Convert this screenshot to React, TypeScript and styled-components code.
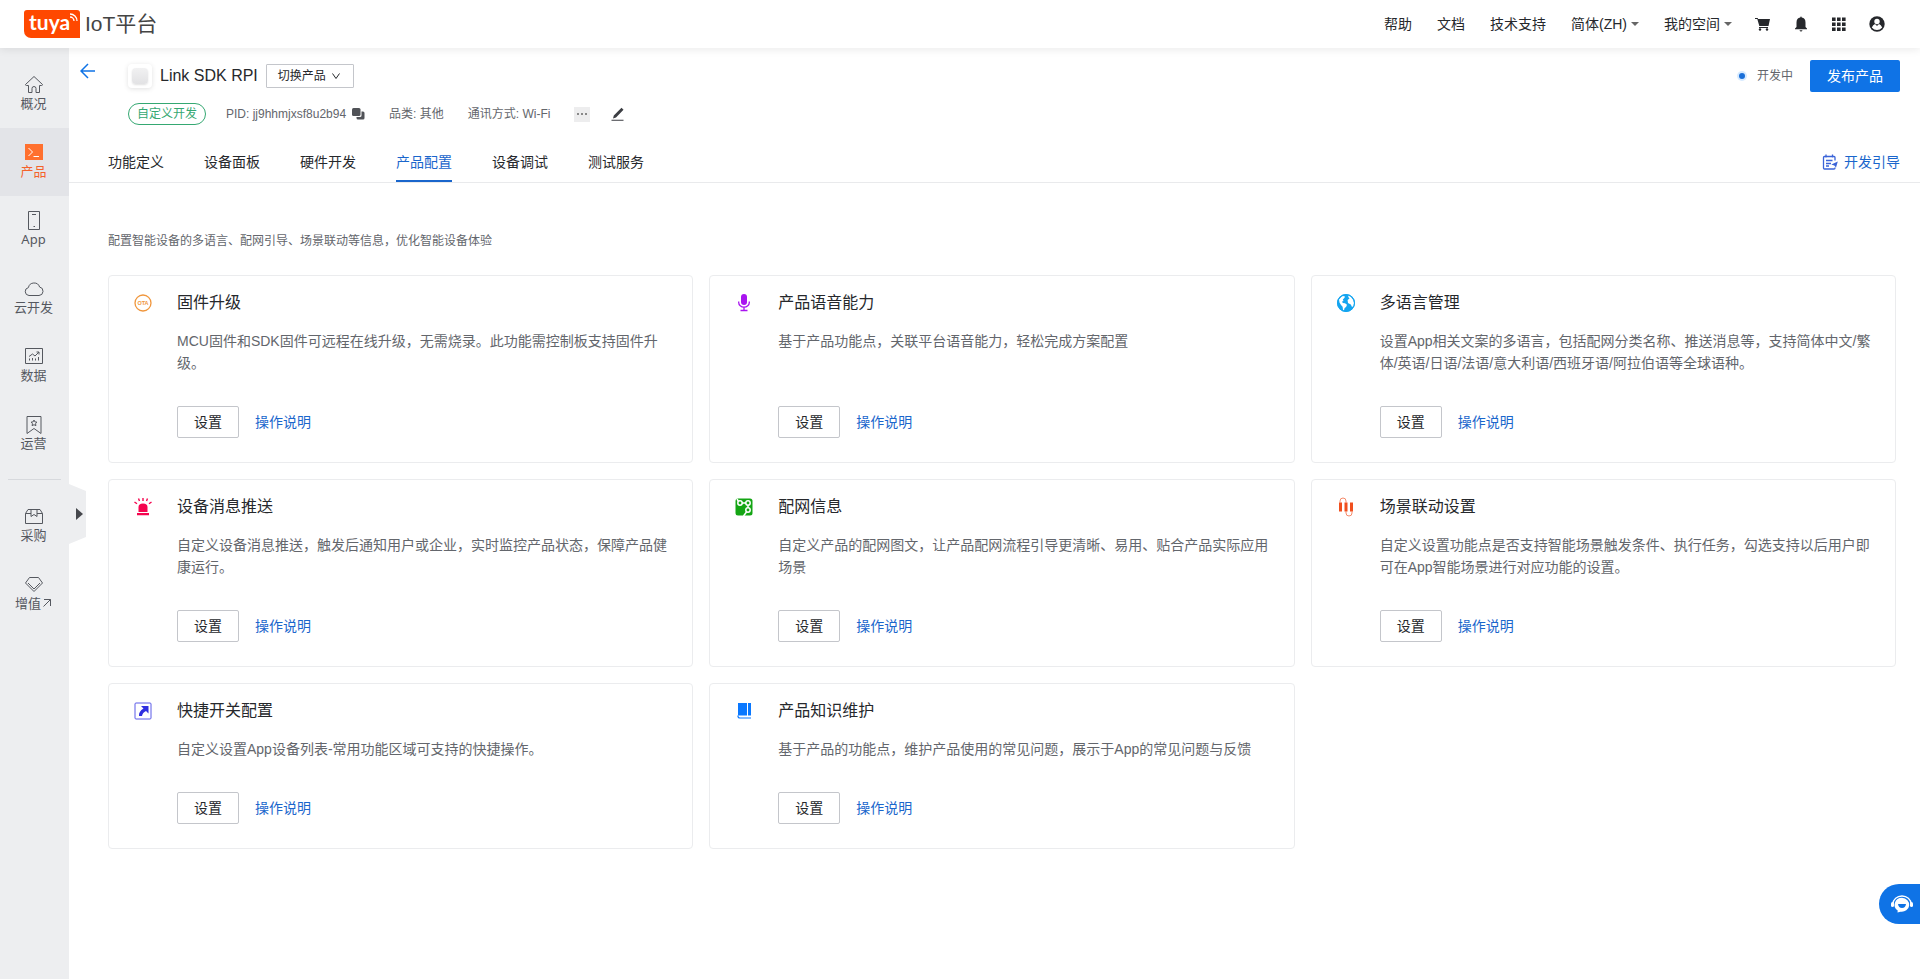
import React from 'react';
import styled, { createGlobalStyle, css } from 'styled-components';

const BLUE = '#0f73e6';
const LINK = '#1a66cc';
const INK = '#26282c';
const GREY = '#63666c';

const GlobalStyle = createGlobalStyle`
  *, *::before, *::after { box-sizing: border-box; }
  body {
    margin: 0;
    background: #fff;
    color: ${INK};
    font-family: 'Liberation Sans', 'Noto Sans CJK SC', sans-serif;
    font-size: 14px;
    line-height: 22px;
  }
  h1, h2, p, ul { margin: 0; padding: 0; font-weight: inherit; }
  ul { list-style: none; }
  a { color: inherit; text-decoration: none; }
  button { font: inherit; color: inherit; border: 0; background: none; padding: 0; cursor: pointer; }
  svg { display: block; flex: none; }
`;

/* ---------- top bar ---------- */

const TopBar = styled.header`
  position: relative;
  z-index: 2;
  display: flex;
  align-items: center;
  justify-content: space-between;
  height: 48px;
  padding: 0 35px 0 24px;
  background: #fff;
  box-shadow: 0 2px 8px rgba(0, 0, 0, 0.08);
`;

const Brand = styled.a`
  display: flex;
  align-items: center;
  gap: 5px;
  color: #444;
  font-size: 21px;
  line-height: 28px;
`;

const BrandMark = styled.span`
  position: relative;
  width: 56px;
  height: 28px;
  padding-left: 5px;
  border-radius: 3px 3px 0 7px;
  background: #ff4800;
  color: #fff;
  font: 700 21px/24px Lato, sans-serif;

  svg {
    position: absolute;
    top: 3px;
    right: 2px;
  }
`;

const TopNav = styled.nav`
  display: flex;
  align-items: center;
  gap: 25px;
`;

const TopItem = styled.button`
  display: flex;
  align-items: center;
  gap: 4px;
`;

const TopIcons = styled.div`
  display: flex;
  align-items: center;
  gap: 22px;
  margin-left: -3px;
`;

const Caret = styled.span`
  border: 4px solid transparent;
  border-top: 4px solid #666;
  border-bottom: 0;
`;

/* ---------- side bar ---------- */

const Body = styled.div`
  display: flex;
  min-height: calc(100vh - 48px);
`;

const Side = styled.aside`
  position: relative;
  flex: none;
  width: 69px;
  padding-top: 12px;
  background: #edeef0;
`;

const SideItem = styled.a<{ $active?: boolean }>`
  display: flex;
  flex-direction: column;
  align-items: center;
  height: 68px;
  padding: 13px 2px 0 0;
  color: #55585f;
  font: 13px/16px 'Noto Sans', 'Noto Sans CJK SC', sans-serif;
  ${p => p.$active && css`
    background: #e3e4e8;
    color: #f4622a;
  `}
`;

const SideLabel = styled.span`
  display: flex;
  align-items: center;
  gap: 1px;
`;

const SideRule = styled.hr`
  height: 1px;
  margin: 11px 8px 12px;
  border: 0;
  background: #d7d9dd;
`;

const Handle = styled.button`
  position: absolute;
  top: 436px;
  left: 69px;
  width: 17px;
  height: 60px;
`;

/* ---------- product head ---------- */

const Main = styled.main`
  flex: 1;
  min-width: 0;
`;

const Head = styled.div`
  display: flex;
  align-items: flex-start;
  padding: 12px 20px 16px 11px;
`;

const Back = styled.button`
  margin: 3px 32px 0 0;
  line-height: 0;
`;

const Info = styled.div`
  display: flex;
  flex-direction: column;
  flex: 1;
  gap: 15px;
  padding-top: 4px;
`;

const TitleRow = styled.div`
  display: flex;
  align-items: center;
  height: 24px;

  h1 {
    margin: 0 8px;
    font-size: 16px;
    line-height: 24px;
  }
`;

const Thumb = styled.span`
  display: grid;
  place-items: center;
  width: 24px;
  height: 24px;
  border-radius: 4px;
  background: #fff;
  box-shadow: 0 1px 5px rgba(0, 0, 0, 0.12);

  &::after {
    content: '';
    width: 16px;
    height: 16px;
    border-radius: 4px;
    background: linear-gradient(#f1f1f2, #e2e2e4);
    box-shadow: 0 1px 2px rgba(0, 0, 0, 0.12);
  }
`;

const SwitchButton = styled.button`
  display: flex;
  align-items: center;
  gap: 6px;
  height: 24px;
  padding: 0 13px 0 11px;
  border: 1px solid #c4c6cb;
  border-radius: 1px;
  font-size: 12px;
`;

const MetaRow = styled.div`
  display: flex;
  align-items: center;
  height: 22px;
  color: ${GREY};
  font-size: 12px;
`;

const Tag = styled.span`
  margin-right: 20px;
  padding: 0 8px;
  border: 1px solid #35a872;
  border-radius: 11px;
  color: #35a872;
  line-height: 20px;
`;

const Meta = styled.span`
  display: flex;
  align-items: center;
  gap: 6px;
  margin-right: 24px;
`;

const More = styled.button`
  display: flex;
  align-items: center;
  justify-content: center;
  gap: 2px;
  width: 16px;
  height: 15px;
  margin-right: 21px;
  background: #ededee;

  i {
    width: 2px;
    height: 2px;
    background: #888;
  }
`;

const Actions = styled.div`
  display: flex;
  align-items: center;
  gap: 17px;
`;

const Status = styled.span`
  display: flex;
  align-items: center;
  gap: 12px;
  color: ${GREY};
  font-size: 12px;

  &::before {
    content: '';
    width: 6px;
    height: 6px;
    border-radius: 50%;
    background: #1a6fd8;
    box-shadow: 0 0 0 2px #d6eaff;
  }
`;

const Publish = styled.button`
  height: 32px;
  padding: 0 17px;
  border-radius: 2px;
  background: ${BLUE};
  color: #fff;
`;

/* ---------- tabs ---------- */

const TabBar = styled.div`
  display: flex;
  justify-content: space-between;
  height: 42px;
  padding: 0 20px 0 39px;
  border-bottom: 1px solid #e9eaec;
`;

const Tabs = styled.nav`
  display: flex;
  gap: 40px;
`;

const Tab = styled.a<{ $active?: boolean }>`
  border-bottom: 2px solid ${p => (p.$active ? LINK : 'transparent')};
  color: ${p => (p.$active ? LINK : INK)};
  line-height: 42px;
`;

const Guide = styled.a`
  display: flex;
  align-items: center;
  gap: 6px;
  color: ${LINK};
`;

/* ---------- cards ---------- */

const Content = styled.section`
  padding: 48px 24px 24px 39px;
`;

const Intro = styled.p`
  margin-bottom: 24px;
  color: ${GREY};
  font-size: 12px;
  line-height: 20px;
`;

const Cards = styled.ul`
  display: grid;
  grid-template-columns: repeat(3, minmax(0, 1fr));
  gap: 16px;
`;

const Card = styled.li`
  display: flex;
  gap: 24px;
  padding: 16px 24px 24px;
  border: 1px solid #ebecee;
  border-radius: 4px;
`;

const CardIcon = styled.span`
  width: 20px;
  padding-top: 1px;
`;

const CardBody = styled.div`
  display: flex;
  flex: 1;
  flex-direction: column;
  min-width: 0;

  h2 {
    font-size: 16px;
  }

  p {
    margin: 16px 0 32px;
    color: ${GREY};
  }
`;

const CardActions = styled.div`
  display: flex;
  align-items: center;
  gap: 16px;
  margin-top: auto;

  a {
    color: ${LINK};
  }
`;

const SetButton = styled.button`
  width: 62px;
  height: 32px;
  border: 1px solid #c4c6cb;
  border-radius: 2px;
`;

const Chat = styled.button`
  position: fixed;
  right: 0;
  bottom: 55px;
  display: flex;
  align-items: center;
  width: 41px;
  height: 40px;
  padding-left: 12px;
  border-radius: 20px 0 0 20px;
  background: ${BLUE};
`;

/* ---------- drawings ---------- */

const Line: React.FC<{ w?: number; h?: number; children: React.ReactNode }> = ({ w = 20, h = 20, children }) => (
  <svg width={w} height={h} viewBox={`0 0 ${w} ${h}`} fill="none" stroke="currentColor" aria-hidden="true">
    {children}
  </svg>
);

const sideIcons = {
  home: <Line h={22}><path d="M10 3.500 1.500 11.500q0 1 1 1H4.500V19.500h3.500v-4q0-2 2-2t2 2v4h3.500v-7h2q1 0 1-1z" /></Line>,
  product: (
    <Line h={22}>
      <path d="M1 3h18v16H1z" fill="#ff702e" stroke="none" />
      <path d="m4.500 7 4 4-4 4M9.500 15.500H15" stroke="#fff" />
    </Line>
  ),
  app: <Line h={22}><path d="M4.500 2.500h11v18h-11zM8 5.500h4M9.500 17.500h1.500" /></Line>,
  cloud: <Line h={22}><path d="M5 18.500a4 4 0 0 1-.6-7.900 5.800 5.800 0 0 1 11.200-.6 4.300 4.300 0 0 1-.6 8.500z" /></Line>,
  data: (
    <Line h={22}>
      <path d="M1.500 3.500h17v15h-17z" />
      <path d="m5 11.500 3.500-2.500 2.500 2 4-4M12.500 7H15v2.500" />
      <path d="M5.500 13.500v2M8.500 13v2.500M11.500 13.500v2M14.500 12v3.500" />
    </Line>
  ),
  operate: (
    <Line h={22}>
      <path d="M3 3.500h14v17l-7-5-7 5z" />
      <path d="m10 7 .9 1.900 2.100.3-1.500 1.400.4 2.100-1.900-1-1.900 1 .4-2.100L7 9.200l2.100-.3z" />
    </Line>
  ),
  buy: <Line h={22}><path d="M1.500 8.500 4 4.500h12l2.500 4v10h-17zM1.500 8.500H7m6 0h5.500M7 4.500v7l3-2 3 2v-7" /></Line>,
  gem: <Line h={22}><path d="M5.500 4.500h9l4 5.500-8.500 8.500L1.500 10zM4 10l6 6 6-6" /></Line>,
};

const cardIcons = {
  ota: (
    <Line>
      <circle cx="10" cy="10" r="8" stroke="#f0963c" strokeWidth="1.300" />
      <text x="10" y="12" fill="#f0963c" stroke="none" fontSize="5.500" fontWeight="700" textAnchor="middle">OTA</text>
    </Line>
  ),
  mic: (
    <Line>
      <rect x="7" y="1" width="6" height="11" rx="3" fill="#a914f0" stroke="none" />
      <path d="M4.700 8.500v1a5.300 4.700 0 0 0 10.600 0v-1M10 14.500v3M6.500 17.500h7" stroke="#a914f0" strokeWidth="1.300" />
    </Line>
  ),
  globe: (
    <Line>
      <circle cx="10" cy="10" r="9" fill="#14a5f0" stroke="none" />
      <path d="M3 6.500 5.500 3.800 7 3l2 .4-.5 1.400L6.800 6.500 7.500 8l-1.500.5.8 1.500 2.200.3 2 1.500-.8 2-1.700 1.500-.5 2.300-1-.8-.4-3L5 12 3.500 9.500z" fill="#fff" stroke="none" />
      <path d="m12 2.500 2.800 1.300 2.400 3.200.8 3-.5 3-1.500 1-1.200-2.500-2.800-1.500-.4-3 1.900-1.500-1-1.200z" fill="#fff" stroke="none" />
      <circle cx="10" cy="10" r="8.500" stroke="#14a5f0" />
    </Line>
  ),
  alarm: (
    <Line>
      <path d="M5.500 15v-5q0-3.500 4.500-3.500t4.500 3.500v5zM4 16h12v2.200H4z" fill="#f5054f" stroke="none" />
      <path d="M10 1v3M5.500 1.500l1 2.500M14.500 1.500l-1 2.500M1.500 5l2.500 1.800M18.500 5 16 6.800" stroke="#f5054f" strokeWidth="1.400" />
    </Line>
  ),
  network: (
    <Line>
      <rect x="1.500" y="1.500" width="17" height="17" rx="2.500" fill="#14a514" stroke="none" />
      <g stroke="#fff" strokeWidth="1.500">
        <circle cx="6" cy="6" r="2.200" /><circle cx="14" cy="6" r="2.200" /><circle cx="14" cy="13" r="2.200" />
        <path d="M8 6h4M12.500 15l-3 4M4.500 4.500 3 2M14 8.500v2.200" />
      </g>
    </Line>
  ),
  scene: (
    <Line>
      <path d="M4.500 5.500v9M10 5.500v9M15.500 5.500v9" stroke="#f04f1e" strokeWidth="3" />
      <path d="M4 6V4a3 3 0 0 1 6 0v2M10 14v2a3 3 0 0 0 6 0v-2" stroke="#f58a6a" />
    </Line>
  ),
  shortcut: (
    <Line>
      <rect x="2" y="2" width="16" height="16" rx="1" stroke="#5a5ae8" />
      <path d="M8 5h7.500v7.500L13 10q-3.500 1.500-4 5H6Q5.500 10.500 10.500 7.500z" fill="#2f2fe0" stroke="none" />
    </Line>
  ),
  book: (
    <Line>
      <path d="M4 2h9v12.500H4zM14 2h3v12.500h-3z" fill="#0a78ff" stroke="none" />
      <path d="M4 14.500q-.3 2.500 2 2.500h11" stroke="#0a78ff" strokeWidth="1.200" />
    </Line>
  ),
};

/* ---------- data ---------- */

type SideKey = keyof typeof sideIcons;
type CardKey = keyof typeof cardIcons;

const sideTop: [SideKey, string][] = [
  ['home', '概况'], ['product', '产品'], ['app', 'App'], ['cloud', '云开发'], ['data', '数据'], ['operate', '运营'],
];

const tabs = ['功能定义', '设备面板', '硬件开发', '产品配置', '设备调试', '测试服务'];

const cards: { icon: CardKey; title: string; text: string }[] = [
  { icon: 'ota', title: '固件升级', text: 'MCU固件和SDK固件可远程在线升级，无需烧录。此功能需控制板支持固件升级。' },
  { icon: 'mic', title: '产品语音能力', text: '基于产品功能点，关联平台语音能力，轻松完成方案配置' },
  { icon: 'globe', title: '多语言管理', text: '设置App相关文案的多语言，包括配网分类名称、推送消息等，支持简体中文/繁体/英语/日语/法语/意大利语/西班牙语/阿拉伯语等全球语种。' },
  { icon: 'alarm', title: '设备消息推送', text: '自定义设备消息推送，触发后通知用户或企业，实时监控产品状态，保障产品健康运行。' },
  { icon: 'network', title: '配网信息', text: '自定义产品的配网图文，让产品配网流程引导更清晰、易用、贴合产品实际应用场景' },
  { icon: 'scene', title: '场景联动设置', text: '自定义设置功能点是否支持智能场景触发条件、执行任务，勾选支持以后用户即可在App智能场景进行对应功能的设置。' },
  { icon: 'shortcut', title: '快捷开关配置', text: '自定义设置App设备列表-常用功能区域可支持的快捷操作。' },
  { icon: 'book', title: '产品知识维护', text: '基于产品的功能点，维护产品使用的常见问题，展示于App的常见问题与反馈' },
];

export default function App() {
  return (
    <>
      <GlobalStyle />
      <TopBar>
        <Brand href="#">
          <BrandMark>
            tuya
            <svg width="9" height="9" viewBox="0 0 9 9" fill="none" stroke="#fff" strokeWidth="1.300">
              <path d="M1 1a7 7 0 0 1 7 7M1 4a4 4 0 0 1 4 4" />
            </svg>
          </BrandMark>
          IoT平台
        </Brand>
        <TopNav>
          <a href="#">帮助</a>
          <a href="#">文档</a>
          <a href="#">技术支持</a>
          <TopItem>简体(ZH)<Caret /></TopItem>
          <TopItem>我的空间<Caret /></TopItem>
          <TopIcons>
            <TopItem aria-label="cart">
              <svg width="17" height="16" viewBox="0 0 17 16" fill={INK}>
                <path d="M1 2h2.800L4 3h12l-1.500 7H5.300L3.300 3H1zM5 11h9v1H5z" />
                <circle cx="6" cy="13.500" r="1.200" /><circle cx="13" cy="13.500" r="1.200" />
              </svg>
            </TopItem>
            <TopItem aria-label="notifications">
              <svg width="16" height="16" viewBox="0 0 16 16" fill={INK}>
                <path d="M7.300 1.500q0-1 .7-1t.7 1q3.800.7 3.800 5V11l1.500 1.500v.8H2v-.8L3.500 11V6.500q0-4.300 3.800-5zM6.500 14.200h3q-.3 1.300-1.500 1.300t-1.500-1.300z" />
              </svg>
            </TopItem>
            <TopItem aria-label="apps">
              <svg width="16" height="16" viewBox="0 0 16 16" fill={INK}>
                {[1, 6, 11].map(y => [1, 6, 11].map(x => <rect key={`${x}-${y}`} x={x} y={y + 0.5} width="3.600" height="3.500" />))}
              </svg>
            </TopItem>
            <TopItem aria-label="account">
              <svg width="16" height="16" viewBox="0 0 16 16">
                <circle cx="8" cy="8" r="7.700" fill={INK} />
                <circle cx="8" cy="5.500" r="2.700" fill="#fff" />
                <path d="M2.800 11.500q1.200-3 3.200-3.500L8 10l2-2q2 .5 3.200 3.500Q11 14 8 14t-5.200-2.500z" fill="#fff" />
              </svg>
            </TopItem>
          </TopIcons>
        </TopNav>
      </TopBar>

      <Body>
        <Side>
          {sideTop.map(([icon, label]) => (
            <SideItem key={label} href="#" $active={icon === 'product'}>
              {sideIcons[icon]}
              <SideLabel>{label}</SideLabel>
            </SideItem>
          ))}
          <SideRule />
          <SideItem href="#">{sideIcons.buy}<SideLabel>采购</SideLabel></SideItem>
          <SideItem href="#">
            {sideIcons.gem}
            <SideLabel>
              增值
              <Line w={10} h={10}><path d="M2 1.500h6.500V8M8.500 1.500l-7 7" /></Line>
            </SideLabel>
          </SideItem>
          <Handle aria-label="expand">
            <svg width="17" height="60" viewBox="0 0 17 60">
              <path d="M0 0 17 7v46L0 60z" fill="#edeef0" />
              <path d="m7 24 7 6-7 6z" fill="#45474c" />
            </svg>
          </Handle>
        </Side>

        <Main>
          <Head>
            <Back aria-label="back">
              <svg width="16" height="16" viewBox="0 0 16 16" fill="none" stroke={BLUE} strokeWidth="1.500">
                <path d="M15 8H1M8 1 1 8l7 7" />
              </svg>
            </Back>
            <Info>
              <TitleRow>
                <Thumb />
                <h1>Link SDK RPI</h1>
                <SwitchButton>
                  切换产品
                  <Line w={8} h={8}><path d="M0.500 1.500 4 6.500l3.500-5" /></Line>
                </SwitchButton>
              </TitleRow>
              <MetaRow>
                <Tag>自定义开发</Tag>
                <Meta>
                  PID: jj9hhmjxsf8u2b94
                  <svg width="13" height="12" viewBox="0 0 13 12" fill="#505257">
                    <rect width="8.500" height="8" rx="1.500" />
                    <path d="M9.500 3.500H11q1.500 0 1.500 1.500v5q0 1.500-1.500 1.500H6Q4.500 11.500 4.500 10V9h3.500q1.500 0 1.500-1.500z" />
                  </svg>
                </Meta>
                <Meta>品类: 其他</Meta>
                <Meta>通讯方式: Wi-Fi</Meta>
                <More aria-label="more"><i /><i /><i /></More>
                <TopItem aria-label="edit">
                  <svg width="14" height="14" viewBox="0 0 14 14" fill="#3c3e43">
                    <path d="m2 11.500.8-3L10.500.800l2 2L5 10.500zM.500 12.800h12v1H.500z" />
                  </svg>
                </TopItem>
              </MetaRow>
            </Info>
            <Actions>
              <Status>开发中</Status>
              <Publish>发布产品</Publish>
            </Actions>
          </Head>

          <TabBar>
            <Tabs>
              {tabs.map(t => <Tab key={t} href="#" $active={t === '产品配置'}>{t}</Tab>)}
            </Tabs>
            <Guide href="#">
              <svg width="16" height="16" viewBox="0 0 16 16" fill="none" stroke="#3a63d8" strokeWidth="1.300">
                <path d="M13 6.500V3.500q0-1-1-1H2.500q-1 0-1 1V14q0 1 1 1H12q1 0 1-1v-.5M4 .5v3M10.500.5v3M4 6.500h6.500M4 9.500h5M4 12h3" />
                <path d="m15.800 7.500-1.800 6-1.700-2-3-1z" fill="#3a63d8" stroke="none" />
              </svg>
              开发引导
            </Guide>
          </TabBar>

          <Content>
            <Intro>配置智能设备的多语言、配网引导、场景联动等信息，优化智能设备体验</Intro>
            <Cards>
              {cards.map(c => (
                <Card key={c.title}>
                  <CardIcon>{cardIcons[c.icon]}</CardIcon>
                  <CardBody>
                    <h2>{c.title}</h2>
                    <p>{c.text}</p>
                    <CardActions>
                      <SetButton>设置</SetButton>
                      <a href="#">操作说明</a>
                    </CardActions>
                  </CardBody>
                </Card>
              ))}
            </Cards>
          </Content>
        </Main>
      </Body>

      <Chat aria-label="chat">
        <svg width="22" height="18" viewBox="0 0 22 18">
          <path d="M2 9a9 8 0 0 1 18 0" fill="none" stroke="#fff" strokeWidth="1.300" />
          <rect x="0" y="7" width="3" height="5" rx="1.500" fill="#fff" />
          <rect x="19" y="7" width="3" height="5" rx="1.500" fill="#fff" />
          <path d="M11 2.800a7.500 7 0 1 1-1.500 13.900L6.500 17.500l.2-2A7.500 7 0 0 1 11 2.800z" fill="#fff" />
          <path d="M7 9h8q-.5 4-4 4T7 9z" fill={BLUE} />
        </svg>
      </Chat>
    </>
  );
}
